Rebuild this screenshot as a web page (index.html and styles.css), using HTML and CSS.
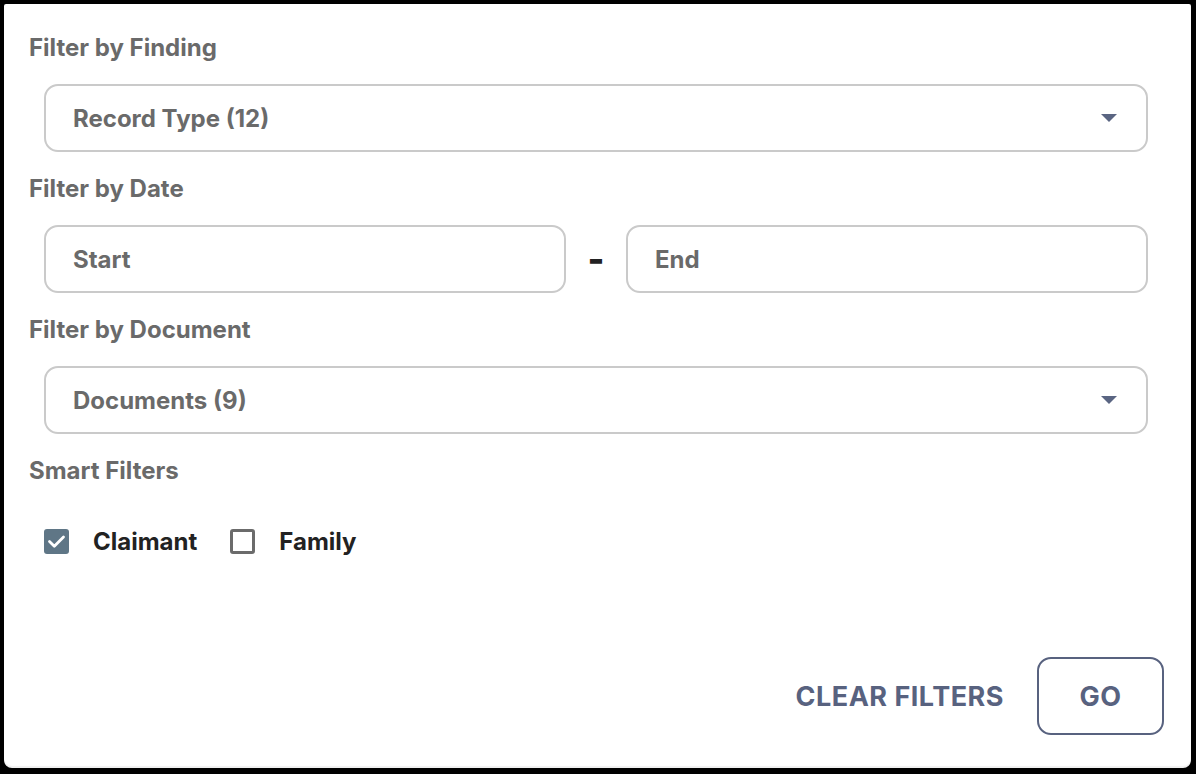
FILE: index.html
```html
<!DOCTYPE html>
<html>
<head>
<meta charset="utf-8">
<link rel="stylesheet" href="styles.css">
</head>
<body>
<div class="panel">
  <div class="label">Filter by Finding</div>
  <div class="box select">
    <span class="value">Record Type (12)</span>
    <span class="caret"></span>
  </div>
  <div class="label">Filter by Date</div>
  <div class="date-row">
    <div class="box date"><span class="value">Start</span></div>
    <span class="dash">-</span>
    <div class="box date"><span class="value">End</span></div>
  </div>
  <div class="label">Filter by Document</div>
  <div class="box select">
    <span class="value">Documents (9)</span>
    <span class="caret"></span>
  </div>
  <div class="label">Smart Filters</div>
  <div class="checks">
    <label class="check">
      <span class="cb checked">
        <svg viewBox="0 0 25 25" width="25" height="25"><path d="M5.5 12.5 L10.3 17.3 L19.5 8" fill="none" stroke="#fff" stroke-width="2.8" stroke-linecap="round" stroke-linejoin="round"/></svg>
      </span>
      <span class="check-text">Claimant</span>
    </label>
    <label class="check">
      <span class="cb"></span>
      <span class="check-text">Family</span>
    </label>
  </div>
  <div class="actions">
    <button class="clear">CLEAR FILTERS</button>
    <button class="go">GO</button>
  </div>
</div>
</body>
</html>
```

FILE: styles.css
```css
html, body {
  margin: 0;
  padding: 0;
  background: #000;
  height: 774px;
  overflow: hidden;
}
body {
  font-family: Inter, "Noto Sans", sans-serif;
  padding: 4px 5px 6px 4px;
  box-sizing: border-box;
}
.panel {
  background: #fff;
  height: 764px;
  box-sizing: border-box;
  border-radius: 2px 2px 8px 8px;
  box-shadow: 0 2px 2px rgba(0,0,0,0.08), inset 0 -2px 1px rgba(0,0,0,0.06);
  padding: 7px 43px 0 25px;
  display: flex;
  flex-direction: column;
}
.label {
  height: 73px;
  display: flex;
  align-items: center;
  font-size: 24px;
  font-weight: 700;
  color: #6a6a6a;
}
.box {
  height: 68px;
  box-sizing: border-box;
  border: 2px solid #cacaca;
  border-radius: 14px;
  display: flex;
  align-items: center;
  padding: 0 29px 0 27px;
}
.select {
  margin-left: 15px;
  justify-content: space-between;
}
.value {
  font-size: 24px;
  font-weight: 700;
  color: #6a6a6a;
}
.caret {
  width: 0;
  height: 0;
  border-left: 8px solid transparent;
  border-right: 8px solid transparent;
  border-top: 8px solid #5a6582;
}
.date-row {
  display: flex;
  align-items: center;
  margin-left: 15px;
}
.date {
  flex: 1;
}
.dash {
  width: 60px;
  text-align: center;
  font-size: 36px;
  font-weight: 800;
  color: #222;
}
.checks {
  display: flex;
  align-items: center;
  gap: 33px;
  margin-left: 15px;
  height: 68px;
}
.check {
  display: flex;
  align-items: center;
  gap: 24px;
}
.cb {
  width: 25px;
  height: 25px;
  box-sizing: border-box;
  border: 3px solid #6b6b6b;
  border-radius: 3px;
  display: block;
}
.cb.checked {
  border: none;
  background: #5f7686;
}
.cb svg { display: block; }
.check-text {
  font-size: 24px;
  font-weight: 700;
  color: #222;
}
.actions {
  margin-top: auto;
  margin-bottom: 33px;
  margin-right: -16px;
  display: flex;
  justify-content: flex-end;
  align-items: center;
  gap: 33px;
}
button {
  font-family: Inter, "Noto Sans", sans-serif;
  font-weight: 700;
  font-size: 27px;
  letter-spacing: 0.5px;
  color: #58627f;
  background: none;
  cursor: pointer;
}
.clear {
  border: none;
  padding: 0;
}
.go {
  width: 127px;
  height: 78px;
  border: 2px solid #58627f;
  border-radius: 14px;
}
```
